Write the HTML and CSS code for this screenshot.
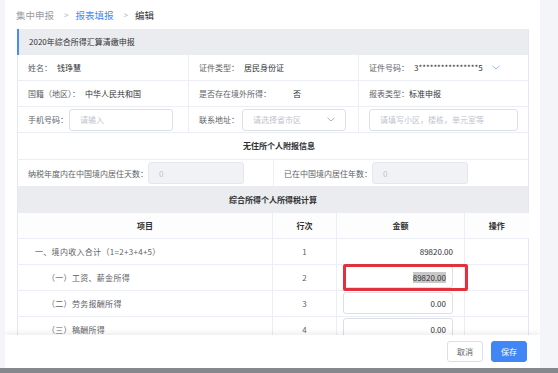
FILE: index.html
```html
<!DOCTYPE html>
<html lang="zh-CN">
<head>
    <meta charset="UTF-8">
    <meta name="viewport" content="width=device-width, initial-scale=1.0">
    <title>编辑 - 报表填报</title>
    <link rel="stylesheet" href="styles.css">
</head>
<body>
    <div class="page">
        <div class="card">
            <div class="crumbs">
                <span class="crumb">集中申报</span>
                <span class="sep">&gt;</span>
                <span class="crumb link">报表填报</span>
                <span class="sep">&gt;</span>
                <span class="crumb current">编辑</span>
            </div>

            <div class="panel">
                <div class="title-bar">2020年综合所得汇算清缴申报</div>

                <div class="info-grid">
                    <div class="cell"><span class="label">姓名：</span><span class="value">钱琤慧</span></div>
                    <div class="cell"><span class="label">证件类型：</span><span class="value">居民身份证</span></div>
                    <div class="cell"><span class="label">证件号码：</span><span class="value">3****************5</span>
                        <svg class="chev blue" width="8" height="5" viewBox="0 0 8 5"><path d="M0.5 0.8 L4 4 L7.5 0.8" fill="none" stroke="currentColor" stroke-width="0.9"/></svg>
                    </div>

                    <div class="cell"><span class="label">国籍（地区）：</span><span class="value">中华人民共和国</span></div>
                    <div class="cell"><span class="label">是否存在境外所得：</span><span class="value no">否</span></div>
                    <div class="cell"><span class="label">报表类型：</span><span class="value tight">标准申报</span></div>

                    <div class="cell"><span class="label">手机号码：</span><span class="input phone">请输入</span></div>
                    <div class="cell"><span class="label">联系地址：</span><span class="input region">请选择省市区
                        <svg class="chev" width="8" height="5" viewBox="0 0 8 5"><path d="M0.5 0.8 L4 4 L7.5 0.8" fill="none" stroke="currentColor" stroke-width="0.9"/></svg></span></div>
                    <div class="cell"><span class="input address">请填写小区，楼栋，单元室等</span></div>
                </div>

                <div class="sub-title">无住所个人附报信息</div>

                <div class="stay-row">
                    <div class="cell"><span class="label">纳税年度内在中国境内居住天数：</span><span class="input disabled">0</span></div>
                    <div class="cell"><span class="label">已在中国境内居住年数：</span><span class="input disabled">0</span></div>
                </div>

                <div class="title-bar center">综合所得个人所得税计算</div>

                <table class="calc">
                    <colgroup>
                        <col class="c-item">
                        <col class="c-line">
                        <col class="c-amount">
                        <col class="c-op">
                    </colgroup>
                    <thead>
                        <tr>
                            <th>项目</th>
                            <th>行次</th>
                            <th>金额</th>
                            <th>操作</th>
                        </tr>
                    </thead>
                    <tbody>
                        <tr>
                            <td class="item">一、境内收入合计（1=2+3+4+5）</td>
                            <td class="num">1</td>
                            <td class="amount"><span class="plain">89820.00</span></td>
                            <td></td>
                        </tr>
                        <tr>
                            <td class="item sub">（一）工资、薪金所得</td>
                            <td class="num">2</td>
                            <td class="amount marked"><span class="input money"><span class="selected">89820.00</span></span><span class="mark"></span></td>
                            <td></td>
                        </tr>
                        <tr>
                            <td class="item sub">（二）劳务报酬所得</td>
                            <td class="num">3</td>
                            <td class="amount"><span class="input money">0.00</span></td>
                            <td></td>
                        </tr>
                        <tr>
                            <td class="item sub">（三）稿酬所得</td>
                            <td class="num">4</td>
                            <td class="amount"><span class="input money">0.00</span></td>
                            <td></td>
                        </tr>
                    </tbody>
                </table>
            </div>

            <div class="footer">
                <button class="btn">取消</button>
                <button class="btn primary">保存</button>
            </div>
        </div>
    </div>
    <div class="taskbar"></div>
</body>
</html>
```

FILE: styles.css
```css
body {
    margin: 0;
    height: 373px;
    overflow: hidden;
    background-color: #f4f5f8;
    font-family: "Noto Sans CJK SC", "Noto Sans", sans-serif;
    font-size: 8px;
    color: #606266;
}

.page {
    display: flex;
    height: 368px;
}

.card {
    position: relative;
    margin-left: 5px;
    width: 535px;
    background-color: #ffffff;
    overflow: hidden;
}

.crumbs {
    display: flex;
    align-items: center;
    height: 29px;
    padding-left: 11px;
    font-size: 9.5px;
}

.crumb {
    color: #9a9ca3;
}

.crumb.link {
    color: #4a8cf0;
}

.crumb.current {
    color: #303133;
}

.sep {
    margin: 0 7px 0 10px;
    color: #a8abb2;
    font-size: 8px;
}

.panel {
    margin-left: 12px;
    width: 512px;
    border-right: 1px solid #e4e7ed;
    box-sizing: border-box;
}

.title-bar {
    height: 26px;
    line-height: 26px;
    padding-left: 10px;
    background-color: #ebecef;
    border-left: 2px solid #4a8cf0;
    color: #303133;
}

.title-bar.center {
    padding-left: 0;
    border-left: 1px solid #e4e7ed;
    text-align: center;
    font-weight: bold;
    height: 27px;
    line-height: 27px;
}

.info-grid {
    display: grid;
    grid-template-columns: 171px 170px 170px;
    border-left: 1px solid #e4e7ed;
}

.cell {
    display: flex;
    align-items: center;
    height: 26px;
    padding-left: 10px;
    border-bottom: 1px solid #ebeef5;
    border-right: 1px solid #ebeef5;
    box-sizing: border-box;
    white-space: nowrap;
}

.info-grid .cell:nth-child(3n) {
    border-right: none;
}

.value {
    margin-left: 5px;
    color: #303133;
}

.value.no {
    margin-left: 22px;
}

.value.tight {
    margin-left: 0;
}

.chev {
    margin-left: 9px;
    color: #a8abb2;
}

.chev.blue {
    color: #8cb4f2;
}

.input {
    display: flex;
    align-items: center;
    height: 22px;
    padding: 0 10px;
    border: 1px solid #dcdfe6;
    border-radius: 3px;
    box-sizing: border-box;
    color: #c0c4cc;
    background-color: #ffffff;
}

.input.phone {
    width: 104px;
    margin-left: 1px;
}

.input.region {
    width: 104px;
    margin-left: 3px;
    justify-content: space-between;
}

.input.region .chev {
    margin-left: 0;
}

.input.address {
    width: 149px;
}

.input.disabled {
    width: 96px;
    background-color: #f0f2f5;
    border-color: #e4e7ed;
}

.sub-title {
    height: 26px;
    line-height: 26px;
    text-align: center;
    font-weight: bold;
    color: #303133;
    border-left: 1px solid #e4e7ed;
    border-bottom: 1px solid #ebeef5;
    padding-left: 12px;
}

.stay-row {
    display: grid;
    grid-template-columns: 256px 255px;
    border-left: 1px solid #e4e7ed;
}

.stay-row .cell {
    border-bottom: none;
}

.stay-row .cell:last-child {
    border-right: none;
}

.calc {
    width: 511px;
    border-collapse: collapse;
    table-layout: fixed;
    border-left: 1px solid #e4e7ed;
}

.c-item { width: 255px; }
.c-line { width: 64px; }
.c-amount { width: 128px; }
.c-op { width: 64px; }

.calc th,
.calc td {
    height: 26px;
    padding: 0;
    border-right: 1px solid #ebeef5;
    border-bottom: 1px solid #ebeef5;
    box-sizing: border-box;
    white-space: nowrap;
}

.calc th:last-child,
.calc td:last-child {
    border-right: none;
}

.calc th {
    height: 25px;
    font-weight: bold;
    color: #303133;
    background-color: #fdfdfd;
}

.calc td.item {
    padding-left: 17px;
    letter-spacing: 0.3px;
}

.calc td.item.sub {
    padding-left: 29px;
}

.calc td.num {
    text-align: center;
}

.calc td.amount {
    position: relative;
    padding-left: 6px;
}

.plain {
    display: block;
    width: 110px;
    text-align: right;
    color: #303133;
}

.input.money {
    width: 110px;
    justify-content: flex-end;
    padding: 0 6px;
    color: #303133;
}

.selected {
    background-color: #c8c8c8;
}

.mark {
    position: absolute;
    left: 6px;
    top: -1px;
    width: 125px;
    height: 27px;
    border: 3px solid #e3303d;
    border-radius: 2px;
    box-sizing: border-box;
}

.footer {
    position: absolute;
    left: 0;
    right: 0;
    bottom: 0;
    height: 33px;
    display: flex;
    justify-content: flex-end;
    align-items: center;
    gap: 8px;
    padding-right: 13px;
    background-color: #ffffff;
    box-shadow: 0 -2px 6px rgba(0, 0, 0, 0.08);
}

.btn {
    width: 36px;
    height: 21px;
    padding: 0;
    border: 1px solid #dcdfe6;
    border-radius: 3px;
    background-color: #ffffff;
    color: #606266;
    font-family: "Noto Sans CJK SC", "Noto Sans", sans-serif;
    font-size: 8px;
}

.btn.primary {
    border-color: #4086f4;
    background-color: #4086f4;
    color: #ffffff;
}

.taskbar {
    height: 5px;
    background-color: #85888d;
}
```
